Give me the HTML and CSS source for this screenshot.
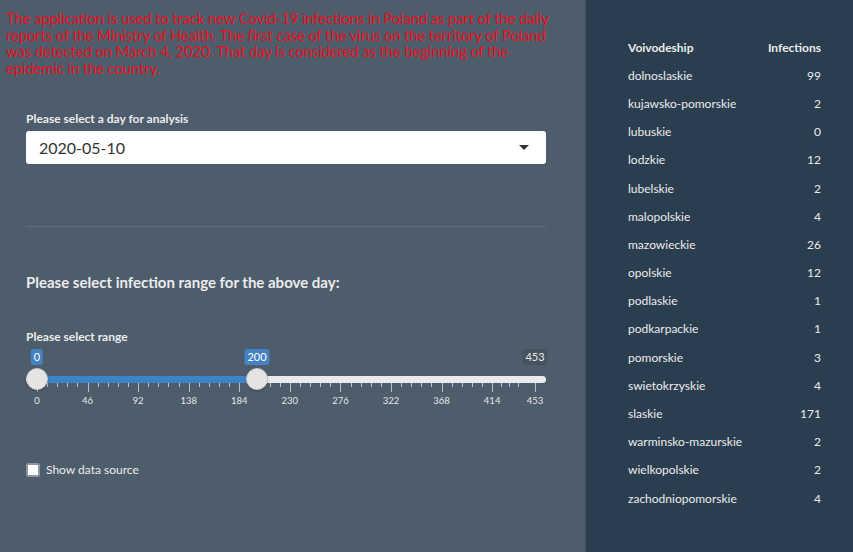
FILE: index.html
```html
<!DOCTYPE html>
<html>
<head>
<meta charset="utf-8">
<link rel="stylesheet" href="styles.css">
</head>
<body>
<div class="app">
  <div class="sidebar">
    <p class="intro">The application is used to track new Covid-19 infections in Poland as part of the daily reports of the Ministry of Health. The first case of the virus on the territory of Poland was detected on March 4, 2020. That day is considered as the beginning of the epidemic in the country.</p>
    <div class="form">
      <label class="ctl-label">Please select a day for analysis</label>
      <div class="select">
        <span>2020-05-10</span>
        <span class="caret"></span>
      </div>
      <hr class="rule">
      <h4 class="heading">Please select infection range for the above day:</h4>
      <label class="ctl-label">Please select range</label>
      <div class="slider">
        <span class="val val-blue" style="left:11px">0</span>
        <span class="val val-blue" style="left:231px">200</span>
        <span class="val val-max" style="left:509px">453</span>
        <div class="track"></div>
        <div class="bar" style="width:220px"></div>
        <div class="grid" id="grid"></div>
        <span class="handle" style="left:11px"></span>
        <span class="handle" style="left:231px"></span>
      </div>
      <label class="check">
        <span class="box"></span>
        <span>Show data source</span>
      </label>
    </div>
  </div>
  <div class="main">
    <table class="tbl">
      <thead>
        <tr><th class="name">Voivodeship</th><th class="num">Infections</th></tr>
      </thead>
      <tbody>
        <tr><td>dolnoslaskie</td><td class="num">99</td></tr>
        <tr><td>kujawsko-pomorskie</td><td class="num">2</td></tr>
        <tr><td>lubuskie</td><td class="num">0</td></tr>
        <tr><td>lodzkie</td><td class="num">12</td></tr>
        <tr><td>lubelskie</td><td class="num">2</td></tr>
        <tr><td>malopolskie</td><td class="num">4</td></tr>
        <tr><td>mazowieckie</td><td class="num">26</td></tr>
        <tr><td>opolskie</td><td class="num">12</td></tr>
        <tr><td>podlaskie</td><td class="num">1</td></tr>
        <tr><td>podkarpackie</td><td class="num">1</td></tr>
        <tr><td>pomorskie</td><td class="num">3</td></tr>
        <tr><td>swietokrzyskie</td><td class="num">4</td></tr>
        <tr><td>slaskie</td><td class="num">171</td></tr>
        <tr><td>warminsko-mazurskie</td><td class="num">2</td></tr>
        <tr><td>wielkopolskie</td><td class="num">2</td></tr>
        <tr><td>zachodniopomorskie</td><td class="num">4</td></tr>
      </tbody>
    </table>
  </div>
</div>
<script>
(function () {
  var grid = document.getElementById('grid');
  var max = 453, x0 = 11, span = 498;
  var majors = [0, 46, 92, 138, 184, 230, 276, 322, 368, 414, 453];
  function px(v) { return x0 + v / max * span; }
  for (var i = 0; i < majors.length; i++) {
    var v = majors[i];
    var t = document.createElement('span');
    t.className = 'tick tick-major';
    t.style.left = px(v) + 'px';
    grid.appendChild(t);
    var l = document.createElement('span');
    l.className = 'tick-label';
    l.style.left = px(v) + 'px';
    l.textContent = v;
    grid.appendChild(l);
    if (i < majors.length - 1) {
      var next = majors[i + 1];
      for (var k = 1; k < 5; k++) {
        var mv = v + (next - v) * k / 5;
        if (next - v < 46 && k > 3) continue;
        var m = document.createElement('span');
        m.className = 'tick tick-minor';
        m.style.left = px(mv) + 'px';
        grid.appendChild(m);
      }
    }
  }
})();
</script>
</body>
</html>
```

FILE: styles.css
```css
* { box-sizing: border-box; }
html, body { margin: 0; padding: 0; }
body {
  font-family: Lato, "Open Sans", sans-serif;
  color: #ebebeb;
  background: #2b3e50;
}
.app {
  display: flex;
  width: 853px;
  height: 552px;
  overflow: hidden;
}
.sidebar {
  width: 586px;
  flex: none;
  background: #4e5d6c;
  border-right: 1px solid #46535f;
}
.main {
  flex: 1;
  background: #2b3e50;
  padding: 33px 32px 0 42px;
}
.intro {
  margin: 0;
  padding: 10px 30px 0 6px;
  color: #e8101d;
  font-size: 15px;
  line-height: 16.5px;
  letter-spacing: -0.18px;
}
.form {
  width: 546px;
  padding-left: 26px;
}
.ctl-label {
  display: block;
  font-size: 12px;
  font-weight: 700;
  line-height: 17px;
  color: #ebebeb;
}
.form > .ctl-label:first-child {
  margin-top: 34px;
}
.select {
  margin-top: 4px;
  height: 33px;
  background: #fff;
  border-radius: 3px;
  display: flex;
  align-items: center;
  justify-content: space-between;
  padding: 0 17px 0 13px;
  color: #333;
  font-size: 16px;
}
.caret {
  width: 0;
  height: 0;
  border-left: 5px solid transparent;
  border-right: 5px solid transparent;
  border-top: 5px solid #333;
}
.rule {
  margin: 62px 0 0;
  border: 0;
  border-top: 1px solid #5f6f7e;
  height: 0;
}
.heading {
  margin: 45px 0 0;
  font-size: 15px;
  font-weight: 700;
  line-height: 20px;
  color: #ebebeb;
}
.heading + .ctl-label {
  margin-top: 36px;
}
.slider {
  position: relative;
  height: 62px;
  margin-top: 3px;
}
.val {
  position: absolute;
  top: 1px;
  transform: translateX(-50%);
  font-size: 11px;
  line-height: 16px;
  padding: 0 3px;
  border-radius: 3px;
  color: #fff;
}
.val-blue { background: #4582c4; }
.val-max { background: #46525e; color: #ebebeb; }
.track {
  position: absolute;
  left: 0;
  right: 0;
  top: 28px;
  height: 7px;
  border-radius: 4px;
  background: #ebebeb;
}
.bar {
  position: absolute;
  left: 11px;
  top: 28px;
  height: 7px;
  background: #3e82c8;
}
.grid {
  position: absolute;
  left: 0;
  right: 0;
  top: 35px;
  height: 28px;
}
.tick {
  position: absolute;
  top: 0;
  width: 1px;
  background: #b9c0c6;
}
.tick-major { height: 9px; }
.tick-minor { height: 4px; }
.tick-label {
  position: absolute;
  top: 12px;
  transform: translateX(-50%);
  font-size: 9.5px;
  line-height: 12px;
  color: #e4e6e8;
}
.handle {
  position: absolute;
  top: 20px;
  width: 22px;
  height: 22px;
  margin-left: -11px;
  border-radius: 50%;
  background: #e4e4e4;
  border: 1px solid #c9c9c9;
  box-shadow: 0 1px 2px rgba(0,0,0,0.25);
}
.check {
  display: flex;
  align-items: center;
  gap: 6px;
  margin-top: 51px;
  font-size: 12px;
  line-height: 17px;
  color: #ebebeb;
}
.box {
  width: 14px;
  height: 14px;
  background: #fff;
  border: 2px solid #8c95a0;
  border-radius: 2px;
}
.tbl {
  width: 193px;
  border-collapse: collapse;
  font-size: 12px;
  color: #ebebeb;
}
.tbl th, .tbl td {
  height: 28.2px;
  padding: 0;
  text-align: left;
  white-space: nowrap;
}
.tbl th { font-weight: 700; font-size: 12px; }
.tbl .num { text-align: right; }
```
